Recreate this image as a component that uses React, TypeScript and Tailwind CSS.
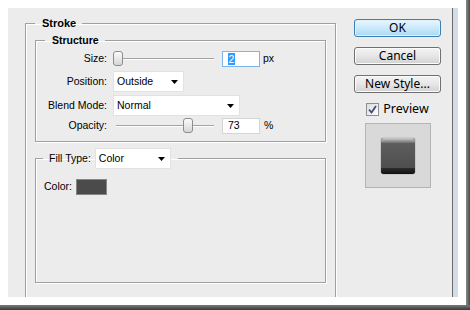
import React from "react";

function Arrow() {
  return (
    <svg width="7" height="4" viewBox="0 0 7 4">
      <path d="M0 0h7L3.5 4z" fill="#000" />
    </svg>
  );
}

function Slider({ thumbClass }: { thumbClass: string }) {
  return (
    <div className="relative w-[101px] h-[16px] flex items-center">
      <div className="ml-[3px] flex-1 h-[2px] border-t border-t-[#a3a3a3] border-b border-b-white" />
      <div
        className={
          "absolute top-[0px] w-[10px] h-[15px] rounded-[3px] border border-[#8e8e8e] bg-gradient-to-b from-[#fbfbfb] to-[#d6d6d6] " +
          thumbClass
        }
      />
    </div>
  );
}

function Button({ children, primary }: { children: React.ReactNode; primary?: boolean }) {
  return (
    <div
      className={
        primary
          ? "h-[18px] w-[87px] rounded-[3px] border border-[#3c7fb1] bg-gradient-to-b from-[#eaf6fd] via-[#cbe9fb] to-[#a7d9f5] flex items-center justify-center text-[12px] text-black font-['Noto_Sans',sans-serif] shadow-[inset_0_0_0_1px_#dff2fc]"
          : "h-[18px] w-[87px] rounded-[3px] border border-[#707070] bg-gradient-to-b from-[#f4f4f4] via-[#e6e6e6] to-[#d2d2d2] flex items-center justify-center text-[12px] text-black font-['Noto_Sans',sans-serif] shadow-[inset_0_0_0_1px_#fbfbfb]"
      }
    >
      {children}
    </div>
  );
}

export default function App() {
  return (
    <div className="w-[470px] h-[310px] bg-white flex flex-col overflow-hidden font-['Liberation_Sans',sans-serif] text-black">
      <div className="flex h-[305px]">
        <div className="w-[8px]" />
        <div className="flex flex-col w-[458px]">
          <div className="h-[8px]" />
          <div className="flex h-[289px]">
            {/* main gray panel */}
            <div className="w-[445px] h-[289px] bg-[#ececec] border-r border-[#6b6b6b] flex overflow-hidden pl-[17px] pt-[8px]">
              {/* Stroke group */}
              <fieldset className="w-[311px] h-[320px] shrink-0 border border-[#a0a0a0] shadow-[1px_1px_0_#fff,inset_1px_1px_0_#fff] pl-[9px] pr-[9px] pt-[3px]">
                <legend className="pl-[7px] pr-[6px] text-[11px] leading-[14px] font-bold">Stroke</legend>

                {/* Structure group */}
                <fieldset className="w-[291px] border border-[#a0a0a0] shadow-[1px_1px_0_#fff,inset_1px_1px_0_#fff] pt-[4px] pb-[7px]">
                  <legend className="ml-[9px] pl-[7px] pr-[6px] text-[10.5px] leading-[14px] font-bold">Structure</legend>
                  <div className="flex flex-col text-[10.5px]">
                    {/* Size */}
                    <div className="flex items-center h-[16px]">
                      <div className="w-[71px] text-right">Size:</div>
                      <div className="w-[6px]" />
                      <Slider thumbClass="left-[0px] w-[9px]" />
                      <div className="ml-[8px] w-[38px] h-[16px] bg-white border border-[#7eb4ea] flex items-center pl-[5px]">
                        <span className="bg-[#3399ff] text-white leading-[12px] px-[0.5px]">2</span>
                      </div>
                      <span className="ml-[3px]">px</span>
                    </div>
                    {/* Position */}
                    <div className="flex items-center h-[21px] mt-[4px]">
                      <div className="w-[71px] text-right">Position:</div>
                      <div className="w-[6px]" />
                      <div className="w-[71px] h-[21px] bg-white border border-[#e2e2e2] flex items-center justify-between pl-[3px] pr-[5px]">
                        <span>Outside</span>
                        <Arrow />
                      </div>
                    </div>
                    {/* Blend Mode */}
                    <div className="flex items-center h-[21px] mt-[3px]">
                      <div className="w-[71px] text-right">Blend Mode:</div>
                      <div className="w-[6px]" />
                      <div className="w-[127px] h-[21px] bg-white border border-[#e2e2e2] flex items-center justify-between pl-[3px] pr-[5px]">
                        <span>Normal</span>
                        <Arrow />
                      </div>
                    </div>
                    {/* Opacity */}
                    <div className="flex items-center h-[16px] mt-[2px]">
                      <div className="w-[71px] text-right">Opacity:</div>
                      <div className="w-[6px]" />
                      <Slider thumbClass="left-[70px]" />
                      <div className="ml-[8px] w-[38px] h-[16px] bg-white border border-[#d5d5d5] flex items-center pl-[5px]">
                        73
                      </div>
                      <span className="ml-[4px]">%</span>
                    </div>
                  </div>
                </fieldset>

                {/* Fill Type group */}
                <fieldset className="mt-[6px] w-[291px] h-[135px] border border-[#a0a0a0] shadow-[1px_1px_0_#fff,inset_1px_1px_0_#fff] pl-[8px]">
                  <legend className="-ml-[1px] pl-[6px] pr-[7px] text-[10.5px]">
                    <div className="flex items-center h-[21px]">
                      <span>Fill Type:</span>
                      <div className="ml-[4px] w-[76px] h-[21px] bg-white border border-[#e2e2e2] flex items-center justify-between pl-[3px] pr-[5px]">
                        <span>Color</span>
                        <Arrow />
                      </div>
                    </div>
                  </legend>
                  <div className="flex items-center mt-[10px] text-[10.5px]">
                    <span>Color:</span>
                    <div className="ml-[4px] w-[31px] h-[16px] bg-[#4b4b4b] border border-[#868686]" />
                  </div>
                </fieldset>
              </fieldset>

              {/* right column */}
              <div className="ml-[18px] w-[87px] flex flex-col items-center pt-[3px]">
                <Button primary>OK</Button>
                <div className="h-[10px]" />
                <Button>Cancel</Button>
                <div className="h-[10px]" />
                <Button>New Style...</Button>
                <div className="mt-[9px] flex items-center h-[14px]">
                  <div className="w-[13px] h-[13px] border border-[#8e8f8f] bg-gradient-to-br from-[#dcdcdc] to-white flex items-center justify-center">
                    <svg width="9" height="9" viewBox="0 0 9 9">
                      <path d="M1 4.5L3.5 7.5L8 1" fill="none" stroke="#3d4f7c" strokeWidth="1.8" />
                    </svg>
                  </div>
                  <span className="ml-[4px] text-[12.5px] font-['Noto_Sans',sans-serif] leading-[14px]">Preview</span>
                </div>
                <div className="mt-[7px] w-[66px] h-[65px] bg-[#d9d9d9] border border-[#b5b5b5] flex items-center justify-center">
                  <div className="w-[34px] h-[36px] rounded-[3px] bg-[#585858] flex flex-col overflow-hidden shadow-[0_0_1px_#333]">
                    <div className="h-[5px] bg-gradient-to-b from-[#d0d0d0] to-[#707070]" />
                    <div className="flex-1 bg-gradient-to-b from-[#5e5e5e] to-[#4e4e4e]" />
                    <div className="h-[6px] bg-gradient-to-b from-[#2e2e2e] to-[#111]" />
                  </div>
                </div>
              </div>
            </div>
            <div className="w-[5px] bg-[#d4dde7]" />
            <div className="w-[8px]" />
          </div>
        </div>
        <div className="w-[4px] bg-gradient-to-r from-[#8c8c8c] to-[#4a4a4a]" />
      </div>
      <div className="h-[5px] bg-gradient-to-b from-[#7a7a7a] to-[#3a3a3a]" />
    </div>
  );
}
